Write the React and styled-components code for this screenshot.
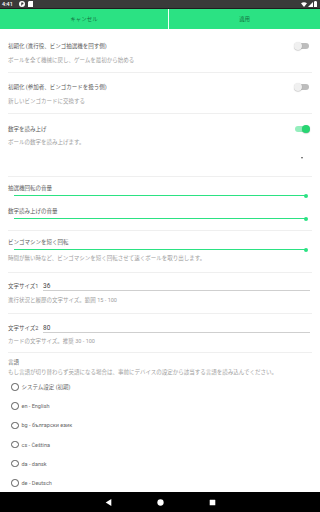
import styled, { createGlobalStyle } from "styled-components";

const GlobalStyle = createGlobalStyle`
	html, body {
		margin: 0;
		padding: 0;
		background: #fff;
	}
	body {
		font-family: Roboto, "Noto Sans CJK JP", sans-serif;
	}
`;

const GREEN = "#2be283";

const languages = [
	"システム設定 (初期)",
	"en - English",
	"bg - български език",
	"cs - Čeština",
	"da - dansk",
	"de - Deutsch",
];

export default function App() {
	return (
		<Screen>
			<GlobalStyle />
			<StatusBar>
				<StatusLeft>
					<span>4:41</span>
					<svg width="6" height="6" viewBox="0 0 12 12">
						<circle cx="6" cy="6" r="6" fill="#fff" />
						<path d="M4.5 3h2.5a2 2 0 0 1 0 4H6v2H4.5z" fill="#3a3a3a" />
					</svg>
					<svg width="5" height="6" viewBox="0 0 10 12">
						<path d="M2 0h8v12H0V2z" fill="#fff" />
					</svg>
				</StatusLeft>
				<StatusRight>
					<svg width="6" height="5" viewBox="0 0 12 10">
						<path d="M0 2.5Q6-2 12 2.5L6 10z" fill="#fff" />
					</svg>
					<svg width="5" height="5" viewBox="0 0 10 10">
						<path d="M10 0v10H0z" fill="#fff" />
					</svg>
					<svg width="3" height="6" viewBox="0 0 6 12">
						<path d="M1.5 0h3v1H6v11H0V1h1.5z" fill="#fff" />
					</svg>
				</StatusRight>
			</StatusBar>
			<ActionBar>
				<ActionButton $width="168px">キャンセル</ActionButton>
				<ActionButton $divider>適用</ActionButton>
			</ActionBar>
			<Content>
				<Section $pt={13} $pb={8}>
					<Row>
						<Title>初期化 (進行役、ビンゴ抽選機を回す側)</Title>
						<Switch />
					</Row>
					<Subtitle $mt={6}>ボールを全て機械に戻し、ゲームを最初から始める</Subtitle>
				</Section>
				<Section $pt={10} $pb={8}>
					<Row>
						<Title>初期化 (参加者、ビンゴカードを扱う側)</Title>
						<Switch />
					</Row>
					<Subtitle $mt={6}>新しいビンゴカードに交換する</Subtitle>
				</Section>
				<Section $pt={11} $pb={10}>
					<Row>
						<Title>数字を読み上げ</Title>
						<Switch on />
					</Row>
					<Subtitle $mt={5}>ボールの数字を読み上げます。</Subtitle>
					<DropdownRow>
						<Caret />
					</DropdownRow>
				</Section>
				<Section $pt={7} $pb={8}>
					<Title>抽選機回転の音量</Title>
					<Slider value={100} />
					<Title $mt={8}>数字読み上げの音量</Title>
					<Slider value={100} />
				</Section>
				<Section $pt={7} $pb={10}>
					<Title>ビンゴマシンを短く回転</Title>
					<Slider value={100} />
					<Subtitle $mt={1}>時間が無い時など、ビンゴマシンを短く回転させて速くボールを取り出します。</Subtitle>
				</Section>
				<Section $pt={9} $pb={9}>
					<Field label="文字サイズ1" value="36" />
					<Subtitle $mt={5}>進行状況と履歴の文字サイズ。範囲 15 - 100</Subtitle>
				</Section>
				<Section $pt={10} $pb={7}>
					<Field label="文字サイズ2" value="80" />
					<Subtitle $mt={4}>カードの文字サイズ。推奨 30 - 100</Subtitle>
				</Section>
				<Section $pt={5} $pb={0} $last>
					<Title>言語</Title>
					<Subtitle $mt={2}>もし言語が切り替わらず英語になる場合は、事前にデバイスの設定から該当する言語を読み込んでください。</Subtitle>
					<RadioList>
						{languages.map((lang) => (
							<RadioRow key={lang}>
								<RadioCircle />
								<RadioLabel>{lang}</RadioLabel>
							</RadioRow>
						))}
					</RadioList>
				</Section>
			</Content>
			<NavBar>
				<svg width="7" height="7" viewBox="0 0 10 10">
					<path d="M9 0v10L1 5z" fill="#fff" />
				</svg>
				<svg width="7" height="7" viewBox="0 0 10 10">
					<circle cx="5" cy="5" r="4.5" fill="#fff" />
				</svg>
				<svg width="7" height="7" viewBox="0 0 10 10">
					<rect x="1" y="1" width="8" height="8" rx="0.5" fill="#fff" />
				</svg>
			</NavBar>
		</Screen>
	);
}

function Switch({ on }) {
	return (
		<SwitchBox>
			<SwitchTrack $on={on} />
			<SwitchThumb $on={on} />
		</SwitchBox>
	);
}

function Slider({ value }) {
	return (
		<SliderBox>
			<SliderTrack>
				<SliderFill style={{ width: `${value}%` }} />
				<SliderThumb style={{ left: `${value}%` }} />
			</SliderTrack>
		</SliderBox>
	);
}

function Field({ label, value }) {
	return (
		<FieldRow>
			<FieldLabel>{label}</FieldLabel>
			<FieldInput>{value}</FieldInput>
		</FieldRow>
	);
}

const Screen = styled.div`
	width: 320px;
	height: 512px;
	display: flex;
	flex-direction: column;
	overflow: hidden;
	background: #fff;
`;

const StatusBar = styled.div`
	height: 8px;
	flex-shrink: 0;
	background: #3a3a3a;
	border-bottom: 1px solid #1e1e1e;
	display: flex;
	align-items: center;
	justify-content: space-between;
	padding: 0 3px 0 2px;
	color: #fff;
	font-size: 5.5px;
	font-weight: 500;
`;

const StatusLeft = styled.div`
	display: flex;
	align-items: center;
	gap: 3px;
	svg:first-of-type {
		margin-left: 3px;
	}
`;

const StatusRight = styled.div`
	display: flex;
	align-items: center;
	gap: 1px;
`;

const ActionBar = styled.div`
	height: 20px;
	flex-shrink: 0;
	display: flex;
	background: ${GREEN};
`;

const ActionButton = styled.div`
	width: ${(p) => p.$width || "auto"};
	flex: ${(p) => (p.$width ? "none" : "1")};
	display: flex;
	align-items: center;
	justify-content: center;
	font-size: 5.5px;
	color: rgba(0, 0, 0, 0.55);
	border-left: ${(p) => (p.$divider ? "1px solid #f2fff7" : "none")};
`;

const Content = styled.div`
	flex: 1;
	overflow: hidden;
	padding: 0 8px;
`;

const Section = styled.div`
	padding-top: ${(p) => p.$pt}px;
	padding-bottom: ${(p) => p.$pb}px;
	border-bottom: ${(p) => (p.$last ? "none" : "1px solid #efefef")};
`;

const Row = styled.div`
	display: flex;
	align-items: center;
	justify-content: space-between;
`;

const Title = styled.div`
	font-size: 5.5px;
	line-height: 8px;
	color: #5a5a5a;
	margin-top: ${(p) => p.$mt || 0}px;
`;

const Subtitle = styled.div`
	font-size: 5.5px;
	line-height: 8px;
	color: #9e9e9e;
	margin-top: ${(p) => p.$mt || 0}px;
`;

const SwitchBox = styled.div`
	position: relative;
	width: 16px;
	height: 8px;
	margin-right: 2px;
`;

const SwitchTrack = styled.div`
	position: absolute;
	left: 1.2px;
	right: 1.2px;
	top: 1.2px;
	height: 5.6px;
	border-radius: 3px;
	background: ${(p) => (p.$on ? "#95eebd" : "#bdbdbd")};
`;

const SwitchThumb = styled.div`
	position: absolute;
	top: 0;
	left: ${(p) => (p.$on ? "8px" : "0")};
	width: 8px;
	height: 8px;
	border-radius: 50%;
	background: ${(p) => (p.$on ? "#27d672" : "#f0f0f0")};
	box-shadow: 0 0.5px 1px rgba(0, 0, 0, 0.3);
`;

const DropdownRow = styled.div`
	height: 16px;
	margin-top: 4px;
	display: flex;
	align-items: center;
	justify-content: flex-end;
	padding-right: 9px;
`;

const Caret = styled.div`
	width: 0;
	height: 0;
	border-left: 1.8px solid transparent;
	border-right: 1.8px solid transparent;
	border-top: 2.2px solid #555;
`;

const SliderBox = styled.div`
	height: 7px;
	display: flex;
	align-items: center;
	padding: 0 6px;
`;

const SliderTrack = styled.div`
	position: relative;
	flex: 1;
	height: 1px;
	background: #c9f4dc;
`;

const SliderFill = styled.div`
	height: 1px;
	background: ${GREEN};
`;

const SliderThumb = styled.div`
	position: absolute;
	top: -1.5px;
	width: 4px;
	height: 4px;
	margin-left: -2px;
	border-radius: 50%;
	background: ${GREEN};
`;

const FieldRow = styled.div`
	display: flex;
	align-items: flex-end;
	padding-right: 2px;
`;

const FieldLabel = styled.div`
	width: 35px;
	font-size: 5.5px;
	line-height: 9px;
	color: #555;
`;

const FieldInput = styled.div`
	flex: 1;
	font-size: 6.5px;
	line-height: 8px;
	color: #444;
	border-bottom: 1px solid #cfcfcf;
`;

const RadioList = styled.div`
	margin-top: 1.4px;
	display: flex;
	flex-direction: column;
`;

const RadioRow = styled.div`
	height: 19.2px;
	display: flex;
	align-items: center;
	gap: 3px;
	padding-left: 3px;
`;

const RadioCircle = styled.div`
	width: 5.5px;
	height: 5.5px;
	border: 0.9px solid #5a5a5a;
	border-radius: 50%;
`;

const RadioLabel = styled.div`
	font-size: 5.5px;
	color: #666;
`;

const NavBar = styled.div`
	height: 20px;
	flex-shrink: 0;
	background: #000;
	display: flex;
	align-items: center;
	justify-content: center;
	gap: 45px;
`;
